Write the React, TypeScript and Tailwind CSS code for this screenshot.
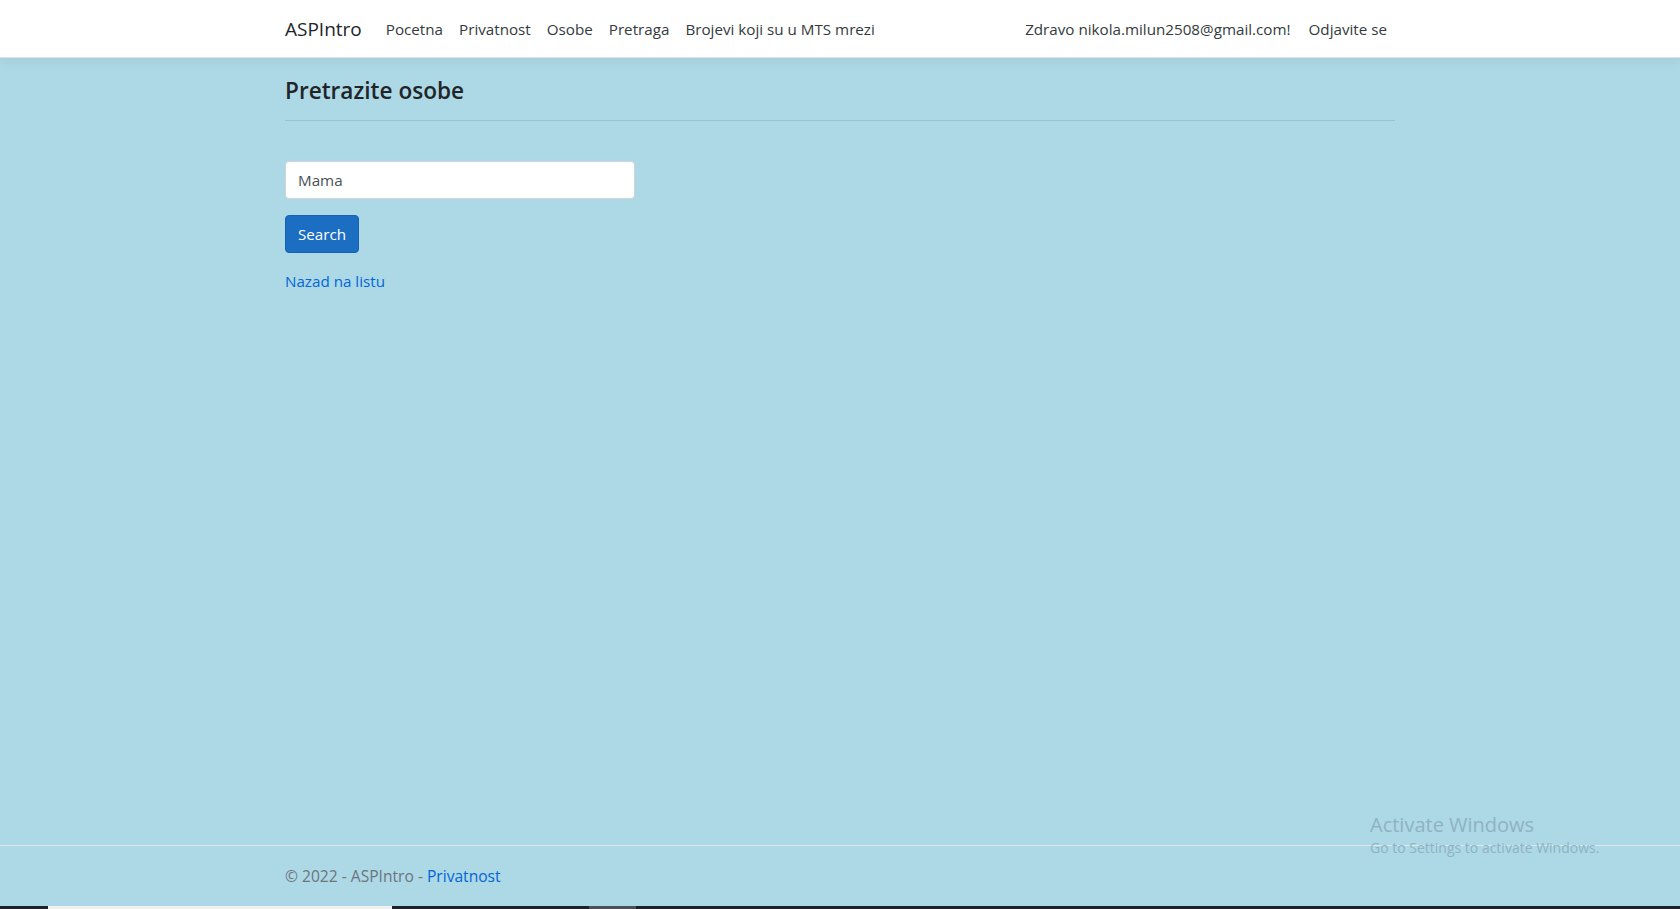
import React from "react";

export default function App() {
  const font = { fontFamily: '"Open Sans", "Noto Sans", Arial, sans-serif' };
  return (
    <div className="relative flex min-h-screen flex-col bg-[#add8e6] text-[15.2px] text-[#212529]" style={font}>
      <header className="relative z-10 h-[58px] border-b border-[#dee2e6] bg-white shadow-[0_4px_12px_rgba(0,0,0,0.05)]">
        <div className="mx-auto flex h-full max-w-[1140px] items-center px-[15px]">
          <span className="mr-4 text-[19px] leading-[30px] text-[#212529]">ASPIntro</span>
          <nav className="flex items-center text-[#343a40]">
            <a className="px-2 py-2 leading-6">Pocetna</a>
            <a className="px-2 py-2 leading-6">Privatnost</a>
            <a className="px-2 py-2 leading-6">Osobe</a>
            <a className="px-2 py-2 leading-6">Pretraga</a>
            <a className="px-2 py-2 leading-6">Brojevi koji su u MTS mrezi</a>
          </nav>
          <div className="ml-auto flex items-center text-[#343a40]">
            <a className="px-2 py-2 leading-6">Zdravo nikola.milun2508@gmail.com!</a>
            <button className="ml-[2px] px-2 py-2 leading-6">Odjavite se</button>
          </div>
        </div>
      </header>

      <main className="mx-auto w-full max-w-[1140px] flex-1 px-[15px] pt-[18px]">
        <h4 className="text-[22.6px] font-semibold leading-[29px] text-[#212529]">Pretrazite osobe</h4>
        <hr className="mt-[15px] border-0 border-t border-[rgba(0,0,0,0.1)]" />
        <div className="mt-[40px] w-[350px]">
          <input
            readOnly
            value="Mama"
            className="block h-[38px] w-full rounded border border-[#ced4da] bg-white px-3 text-[15.2px] text-[#495057] outline-none"
            style={font}
          />
        </div>
        <button className="mt-4 h-[38px] rounded border border-[#1861ac] bg-[#1b6ec2] px-3 text-[15.2px] text-white">
          Search
        </button>
        <div className="mt-4 leading-6">
          <a className="text-[#0366d6]">Nazad na listu</a>
        </div>
      </main>

      <footer className="border-t border-[#e5e5e5] text-[15.6px] leading-[60px] text-[#6c757d]">
        <div className="mx-auto max-w-[1140px] px-[15px]">
          © 2022 - ASPIntro - <a className="text-[#0366d6]">Privatnost</a>
        </div>
      </footer>
      <div className="flex h-[3px] bg-[#1b2326]">
        <div className="ml-[48px] w-[344px] bg-[#f0f0f0]" />
        <div className="ml-[197px] w-[47px] bg-[#4a5256]" />
      </div>

      <div className="pointer-events-none absolute left-[1370px] top-[812px] text-[#8fb3c0]">
        <div className="text-[20px] leading-[26px]">Activate Windows</div>
        <div className="text-[14px] leading-[20px]">Go to Settings to activate Windows.</div>
      </div>
    </div>
  );
}
